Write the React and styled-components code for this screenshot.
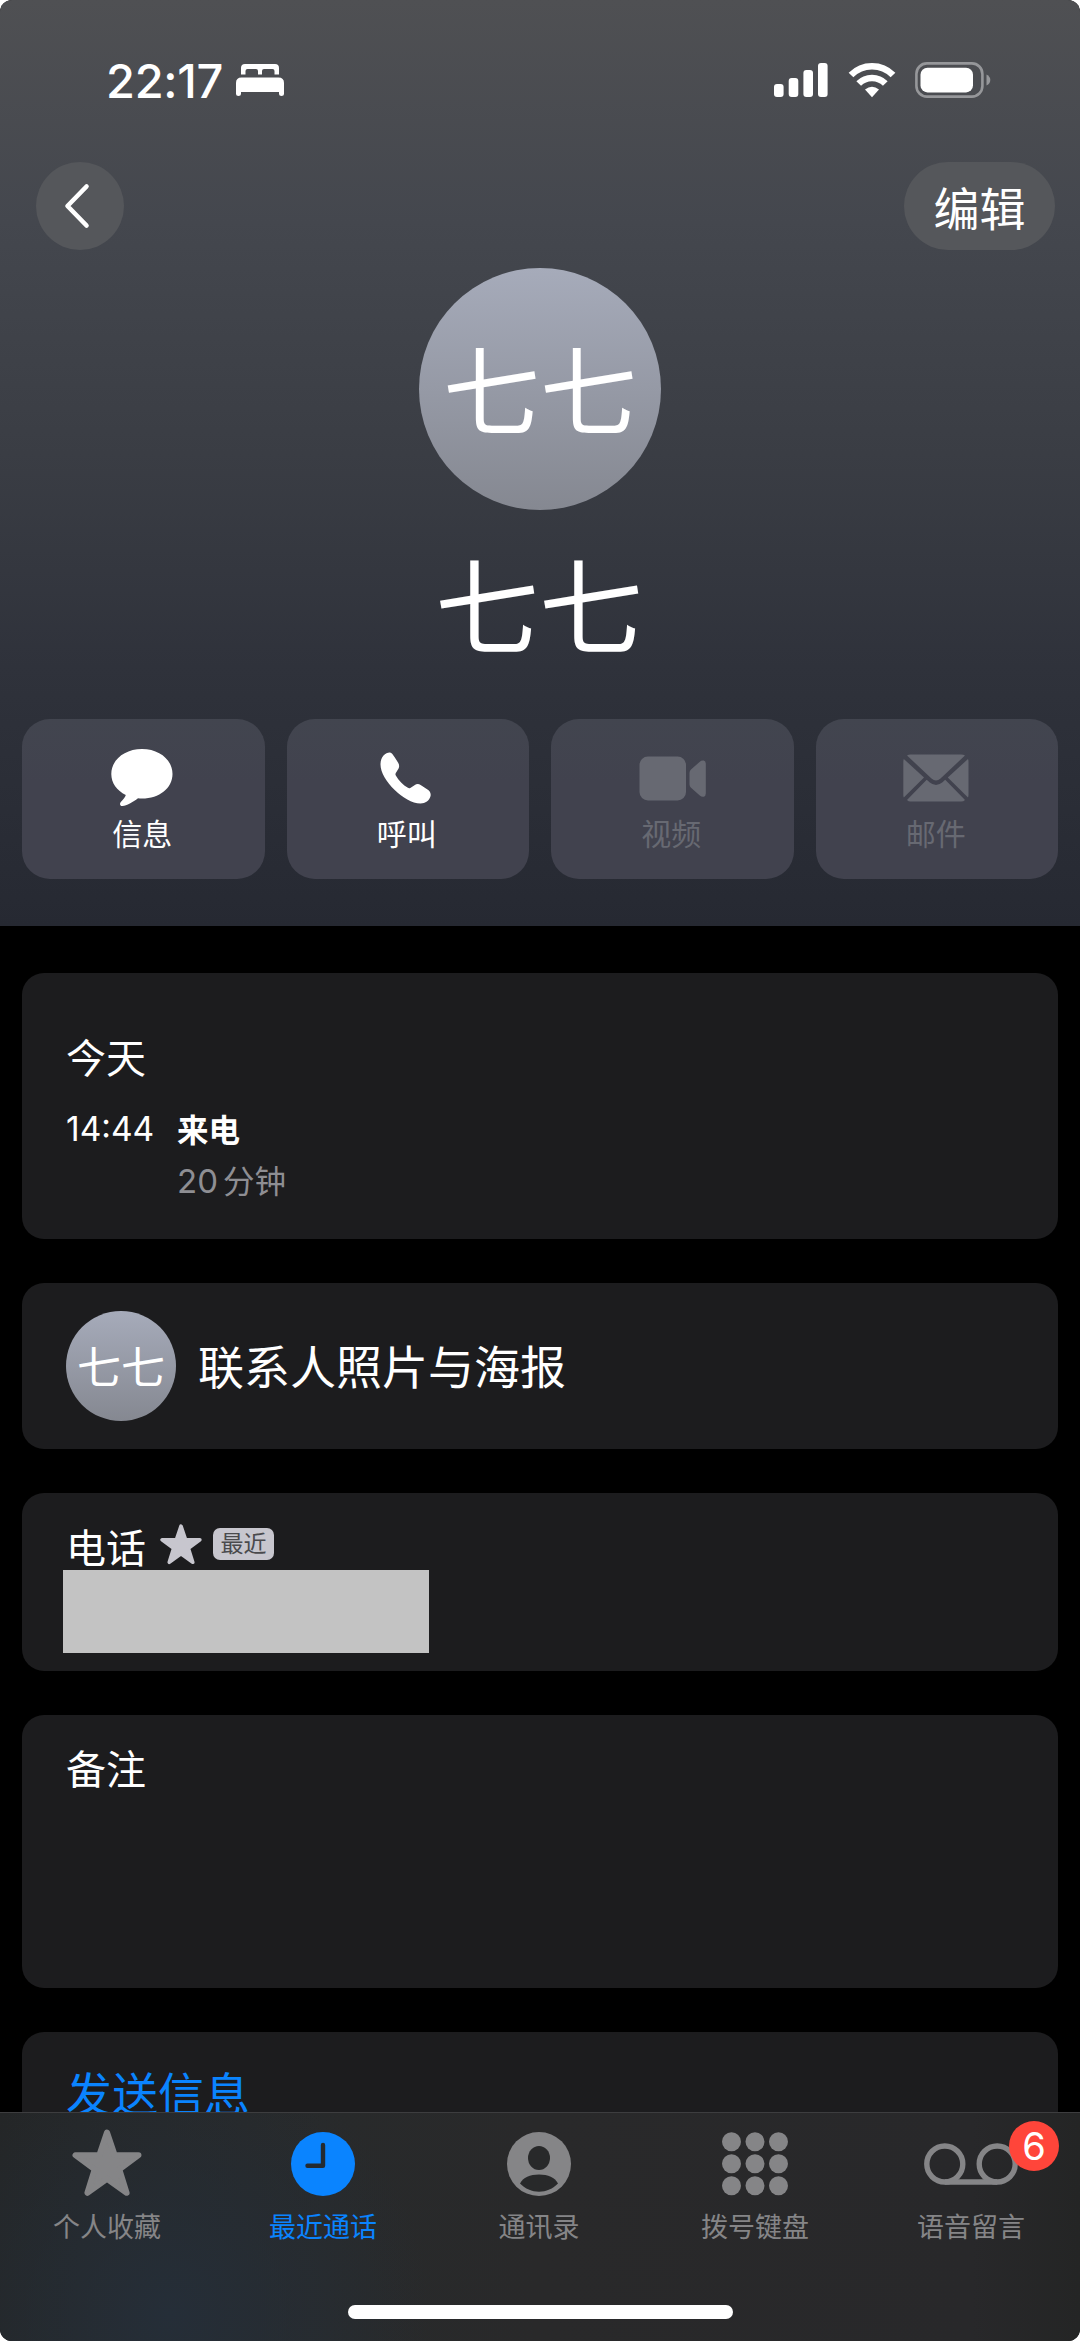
import React, { useState } from 'react'
import styled, { createGlobalStyle } from 'styled-components'

const GlobalStyle = createGlobalStyle`
  * {
    box-sizing: border-box;
  }
  body {
    margin: 0;
    background: #fff;
    font-family: Inter, 'Noto Sans CJK SC', sans-serif;
    color: #fff;
  }
`

const actions = [
  { id: 'message', label: '信息' },
  { id: 'call', label: '呼叫' },
  { id: 'video', label: '视频', disabled: true },
  { id: 'mail', label: '邮件', disabled: true },
]

const tabs = [
  { id: 'favorites', label: '个人收藏' },
  { id: 'recents', label: '最近通话' },
  { id: 'contacts', label: '通讯录' },
  { id: 'keypad', label: '拨号键盘' },
  { id: 'voicemail', label: '语音留言', count: 6 },
]

function StarIcon({ size }) {
  return (
    <svg width={size} height={size} viewBox="0 0 70 70" fill="currentColor" stroke="currentColor" strokeWidth="6" strokeLinejoin="round">
      <path d="M35 3.5 L42.6 26 L66.5 26.2 L47.3 40.3 L54.6 63.800 L35 49.800 L15.4 63.800 L22.7 40.3 L3.5 26.2 L27.4 26 Z" />
    </svg>
  )
}

function BedIcon() {
  return (
    <svg width="48" height="34" viewBox="0 0 48 34" fill="#fff">
      <path d="M5 11.5 V5 Q5 1 9 1 H39 Q43 1 43 5 V11.5 H38.5 V8 Q38.5 6 36.5 6 H28 Q26 6 26 8 V11.5 H22 V8 Q22 6 20 6 H11.5 Q9.5 6 9.5 8 V11.5 Z" />
      <path d="M0 20 Q0 14.5 5.5 14.5 H42.5 Q48 14.5 48 20 V31 Q48 33 45.5 33 Q43 33 43 31 V29 H5 V31 Q5 33 2.5 33 Q0 33 0 31 Z" />
    </svg>
  )
}

function SignalIcon() {
  return (
    <svg width="54" height="36" viewBox="0 0 54 36" fill="#fff">
      <rect x="0" y="22" width="9.6" height="13" rx="3" />
      <rect x="14.7" y="16" width="9.6" height="19" rx="3" />
      <rect x="29.4" y="8" width="9.6" height="27" rx="3" />
      <rect x="44" y="1" width="9.6" height="34" rx="3" />
    </svg>
  )
}

function WifiIcon() {
  return (
    <svg width="48" height="36" viewBox="0 0 48 36" fill="none" stroke="#fff" strokeWidth="6.6">
      <path d="M3 13 A29.5 29.5 0 0 1 45 13" />
      <path d="M10.7 21.5 A18.7 18.7 0 0 1 37.3 21.5" />
      <path d="M17 27.5 Q24 22 31 27.5 L24 35.2 Z" fill="#fff" stroke="none" />
    </svg>
  )
}

function BatteryIcon() {
  return (
    <svg width="76" height="36" viewBox="0 0 76 36">
      <rect x="1.4" y="1.4" width="66" height="33.2" rx="10.5" fill="none" stroke="#96979a" strokeWidth="2.6" />
      <rect x="5.5" y="5.8" width="52.5" height="24.6" rx="7" fill="#fff" />
      <path d="M71.5 12.5 Q75.3 14.5 75.3 18 Q75.3 21.5 71.5 23.5 Z" fill="#96979a" />
    </svg>
  )
}

function BackIcon() {
  return (
    <svg width="26" height="46" viewBox="0 0 26 46" fill="none" stroke="#fff" strokeWidth="4.6" strokeLinecap="round" strokeLinejoin="round">
      <path d="M22.5 3.5 L3.5 23 L22.5 42.5" />
    </svg>
  )
}

function ActionIcon({ id }) {
  if (id === 'message') {
    return (
      <svg width="62" height="58" viewBox="0 0 62 58" fill="currentColor">
        <path d="M31 0 C48.5 0 61.5 11 61.5 25 C61.5 39 48.5 49.5 31 49.5 C29.5 49.5 28.4 49.5 27 49.3 C22 53 15.5 56.8 11.5 57 C9 57.1 8.3 54.8 9.8 53 C12 50.5 14.2 48.4 14.8 46 C5.8 41.5 0.3 34 0.3 25 C0.3 11 13.5 0 31 0 Z" />
      </svg>
    )
  }
  if (id === 'call') {
    return (
      <svg width="53" height="52" viewBox="0 0 53 52" fill="currentColor">
        <path d="M3.5 3.5 C5.5 1.5 8 0.3 10 0.5 C11.8 0.7 13 2.8 14.5 5 L18 10.5 C19.8 13.3 19.3 15.3 17.8 17.8 L15.8 21 C15.3 21.9 15.3 22.5 15.8 23.4 C18.8 28.5 23 32.8 27.9 35.8 C28.8 36.4 29.5 36.4 30.3 35.9 L34.5 33.2 C36.6 31.8 38.6 31.7 40.6 33 L47.5 37.5 C50 39.2 51.2 41.5 50.5 44.3 C49.3 48.7 45.5 51.5 40.5 51.5 C32 51.5 22.5 45.5 14.7 38 C6.5 30 0.5 20.5 0.5 12.5 C0.5 9 1.5 5.7 3.5 3.5 Z" />
      </svg>
    )
  }
  if (id === 'video') {
    return (
      <svg width="67" height="45" viewBox="-1 0 67 45" fill="currentColor" overflow="visible">
        <rect x="0.5" y="0.5" width="46.5" height="44" rx="8.5" />
        <path d="M50.5 17 Q50.5 14.8 52 13.5 L60.5 6 Q62.5 4.2 64.7 4.6 Q66.8 5 66.8 7.8 V37.5 Q66.8 40.2 64.7 40.7 Q62.5 41 60.5 39.2 L52 31.8 Q50.5 30.5 50.5 28.3 Z" />
      </svg>
    )
  }
  return (
    <svg width="66" height="48" viewBox="0 0 66 48" fill="currentColor">
      <path d="M4 1.5 Q5.5 0.5 7.5 0.5 H58 Q60.5 0.5 62 1.5 L37.5 24.5 Q33 28.6 28.5 24.5 Z" />
      <path d="M0.8 5 L21 23.5 L0.8 43.5 Q0.3 42.5 0.3 40.5 V8 Q0.3 6 0.8 5 Z" />
      <path d="M65 5 L44.8 23.5 L65 43.5 Q65.5 42.5 65.5 40.5 V8 Q65.5 6 65 5 Z" />
      <path d="M23.7 25.7 L26.5 28.2 Q33 33.6 39.5 28.2 L42.2 25.7 L62 46 Q60.5 47.5 58 47.5 H7.5 Q5.5 47.5 4 46 Z" />
    </svg>
  )
}

function TabIcon({ id }) {
  if (id === 'favorites') {
    return <StarIcon size={70} />
  }
  if (id === 'recents') {
    return (
      <svg width="64" height="64" viewBox="0 0 64 64">
        <circle cx="32" cy="32" r="32" fill="currentColor" />
        <path d="M32 13 V33.7 H16.5" fill="none" stroke="#242a30" strokeWidth="4.4" strokeLinecap="round" strokeLinejoin="round" />
      </svg>
    )
  }
  if (id === 'contacts') {
    return (
      <svg width="64" height="64" viewBox="0 0 64 64">
        <circle cx="32" cy="32" r="32" fill="currentColor" />
        <ellipse cx="32" cy="26" rx="11" ry="12" fill="#28292a" />
        <path d="M13 51.5 C16 45.5 23 42.5 32 42.5 C41 42.5 48 45.5 51 51.5 C46 56.8 39 59.7 32 59.7 C25 59.7 18 56.8 13 51.5 Z" fill="#28292a" />
      </svg>
    )
  }
  if (id === 'keypad') {
    return (
      <svg width="66" height="64" viewBox="0 0 66 64" fill="currentColor">
        {[9.5, 33, 56.5].map(x =>
          [9.8, 31.8, 53.8].map(y => <circle key={`${x}-${y}`} cx={x} cy={y} r="9.5" />)
        )}
      </svg>
    )
  }
  return (
    <svg width="94" height="42" viewBox="0 0 94 42" fill="none" stroke="currentColor" strokeWidth="5.4">
      <circle cx="20.8" cy="21" r="18" />
      <circle cx="73.2" cy="21" r="18" />
      <path d="M20.8 39 H73.2" />
    </svg>
  )
}

export default function App() {
  const [activeTab, setActiveTab] = useState('recents')
  return (
    <Screen>
      <GlobalStyle />
      <Header>
        <StatusBar>
          <Time>22:17</Time>
          <BedIcon />
          <StatusRight>
            <SignalIcon />
            <WifiIcon />
            <BatteryIcon />
          </StatusRight>
        </StatusBar>
        <NavBar>
          <BackButton>
            <BackIcon />
          </BackButton>
          <EditButton>编辑</EditButton>
        </NavBar>
        <Avatar>七七</Avatar>
        <Name>七七</Name>
        <Actions>
          {actions.map(a => (
            <Action key={a.id} disabled={a.disabled}>
              <ActionGlyph>
                <ActionIcon id={a.id} />
              </ActionGlyph>
              {a.label}
            </Action>
          ))}
        </Actions>
      </Header>

      <Content>
        <CallCard>
          <CardTitle>今天</CardTitle>
          <CallRow>
            <CallTime>14:44</CallTime>
            <div>
              <CallType>来电</CallType>
              <Duration>20<span>分钟</span></Duration>
            </div>
          </CallRow>
        </CallCard>

        <PhotoCard>
          <Avatar $small>七七</Avatar>
          <p>联系人照片与海报</p>
        </PhotoCard>

        <PhoneCard>
          <PhoneLabel>
            <CardTitle>电话</CardTitle>
            <StarIcon size={42} />
            <Tag>最近</Tag>
          </PhoneLabel>
          <HiddenNumber />
        </PhoneCard>

        <NoteCard>
          <CardTitle>备注</CardTitle>
        </NoteCard>

        <LinkCard>
          <a>发送信息</a>
        </LinkCard>
      </Content>

      <TabBar>
        <Tabs>
          {tabs.map(t => (
            <Tab key={t.id} $active={t.id === activeTab} onClick={() => setActiveTab(t.id)}>
              <TabGlyph>
                <TabIcon id={t.id} />
                {t.count && <Count>{t.count}</Count>}
              </TabGlyph>
              {t.label}
            </Tab>
          ))}
        </Tabs>
        <HomeIndicator />
      </TabBar>
    </Screen>
  )
}

const Screen = styled.div`
  display: flex;
  flex-direction: column;
  width: 1080px;
  height: 2341px;
  overflow: hidden;
  border-radius: 12px;
  background: #000;
`

const Header = styled.header`
  display: flex;
  flex-direction: column;
  align-items: center;
  flex: none;
  height: 926px;
  background: linear-gradient(180deg, #4f5053 0%, #44474e 24%, #3a3d44 49%, #2f323b 72%, #262932 100%);
`

const StatusBar = styled.div`
  display: flex;
  align-items: center;
  width: 100%;
  height: 162px;
  padding: 0 89px 2px 106px;
  svg {
    flex: none;
  }
`

const Time = styled.span`
  width: 130px;
  font-size: 47px;
  font-weight: 550;
  letter-spacing: -0.3px;
  white-space: nowrap;
`

const StatusRight = styled.div`
  display: flex;
  align-items: center;
  gap: 19.5px;
  margin-left: auto;
`

const NavBar = styled.div`
  display: flex;
  justify-content: space-between;
  width: 100%;
  height: 106px;
  padding: 0 25px 0 36px;
`

const NavButton = styled.button`
  display: flex;
  align-items: center;
  justify-content: center;
  height: 88px;
  padding: 0;
  border: 0;
  border-radius: 44px;
  background: #55575b;
  color: #fff;
  font-family: inherit;
`

const BackButton = styled(NavButton)`
  width: 88px;
  padding-right: 6px;
`

const EditButton = styled(NavButton)`
  width: 151px;
  font-size: 46px;
`

const Avatar = styled.div`
  display: flex;
  align-items: center;
  justify-content: center;
  flex: none;
  width: ${props => props.$small ? '110px' : '242px'};
  height: ${props => props.$small ? '110px' : '242px'};
  padding-top: ${props => props.$small ? '4px' : '7px'};
  border-radius: 50%;
  background: linear-gradient(180deg, #a6abba, #858891);
  font-size: ${props => props.$small ? '44px' : '97px'};
  font-weight: 400;
  line-height: 1;
`

const Name = styled.h1`
  margin: 44px 2px 0 0;
  font-size: 104px;
  font-weight: 400;
  line-height: 111px;
`

const Actions = styled.div`
  display: grid;
  grid-template-columns: repeat(4, 1fr);
  gap: 22px;
  width: 100%;
  margin-top: 54px;
  padding: 0 22px;
`

const Action = styled.button`
  display: flex;
  flex-direction: column;
  align-items: center;
  height: 160px;
  padding: 24px 2px 0 0;
  border: 0;
  border-radius: 28px;
  background: linear-gradient(180deg, #42454f, #41424e 40%);
  color: ${props => props.disabled ? '#676972' : '#fff'};
  font-family: inherit;
  font-size: 30px;
  line-height: 42px;
`

const ActionGlyph = styled.span`
  display: flex;
  align-items: center;
  justify-content: center;
  height: 70px;
`

const Content = styled.main`
  display: flex;
  flex-direction: column;
  flex: 1;
  gap: 44px;
  min-height: 0;
  padding: 47px 22px 0;
  overflow: hidden;
`

const Card = styled.section`
  flex: none;
  padding: 0 44px;
  border-radius: 22px;
  background: #1c1c1e;
`

const CardTitle = styled.h2`
  margin: 0;
  font-size: 40px;
  font-weight: 400;
  line-height: 56px;
`

const CallCard = styled(Card)`
  height: 266px;
  padding-top: 58px;
`

const CallRow = styled.div`
  display: flex;
  margin-top: 19px;
  line-height: 50px;
`

const CallTime = styled.span`
  width: 111px;
  font-size: 33.5px;
  line-height: 47px;
`

const CallType = styled.div`
  font-size: 31.5px;
  font-weight: 600;
`

const Duration = styled.div`
  color: #8e8e93;
  font-size: 33px;
  span {
    margin-left: 5px;
    font-size: 31.5px;
  }
`

const PhotoCard = styled(Card)`
  display: flex;
  align-items: center;
  gap: 22px;
  height: 166px;
  p {
    margin: 0 0 4px;
    font-size: 46px;
  }
`

const PhoneCard = styled(Card)`
  height: 178px;
  padding-top: 27px;
`

const PhoneLabel = styled.div`
  display: flex;
  align-items: center;
  height: 50px;
  h2 {
    padding-top: 7px;
  }
  svg {
    margin: 0 11px 0 14px;
    color: #c7c6ce;
  }
`

const Tag = styled.span`
  height: 32px;
  margin-bottom: 3px;
  padding: 0 7.5px;
  border-radius: 7px;
  background: #c7c6ce;
  color: #4a4a4d;
  font-size: 23px;
  line-height: 33px;
`

const HiddenNumber = styled.div`
  width: 366px;
  height: 83px;
  margin-left: -3px;
  background: #c3c3c3;
`

const NoteCard = styled(Card)`
  height: 273px;
  padding-top: 27px;
`

const LinkCard = styled(Card)`
  height: 166px;
  padding-top: 29px;
  a {
    color: #0a84ff;
    font-size: 46px;
    line-height: 66px;
  }
`

const TabBar = styled.nav`
  display: flex;
  flex-direction: column;
  align-items: center;
  flex: none;
  height: 229px;
  border-top: 1px solid #3d3d3f;
  background:
    radial-gradient(ellipse 260px 260px at 170px 200px, #252e38, rgba(37, 46, 56, 0)),
    linear-gradient(90deg, #242627 0, #282a2b 30%, #29292a 50%, #28282a 90%, #242525);
`

const Tabs = styled.div`
  display: grid;
  grid-template-columns: repeat(5, 216px);
  width: 100%;
  height: 192px;
`

const Tab = styled.button`
  display: flex;
  flex-direction: column;
  align-items: center;
  padding: 14px 2px 0 0;
  border: 0;
  background: none;
  color: ${props => props.$active ? '#0a84ff' : '#858587'};
  font-family: inherit;
  font-size: 27px;
  line-height: 38px;
`

const TabGlyph = styled.span`
  position: relative;
  display: flex;
  align-items: center;
  justify-content: center;
  height: 74px;
  margin-bottom: 8px;
`

const Count = styled.span`
  position: absolute;
  top: -6px;
  left: 85px;
  width: 50px;
  height: 50px;
  border-radius: 50%;
  background: #ff453a;
  color: #fff;
  font-size: 38px;
  line-height: 50px;
  text-align: center;
`

const HomeIndicator = styled.div`
  width: 385px;
  height: 14px;
  border-radius: 7px;
  background: #fff;
`
